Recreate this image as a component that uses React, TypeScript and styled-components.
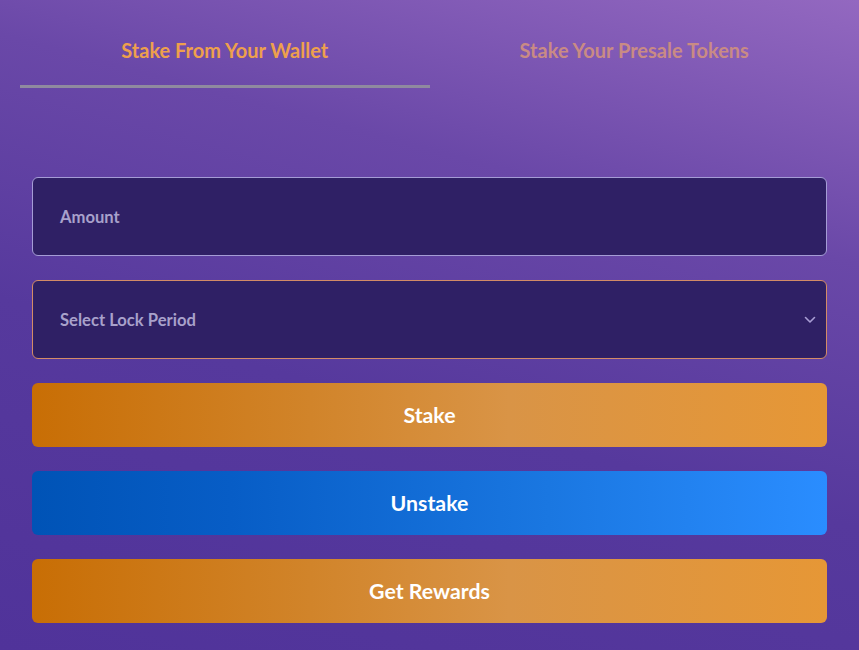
import React from "react";
import styled, { createGlobalStyle } from "styled-components";

const Global = createGlobalStyle`
  html, body { margin: 0; padding: 0; }
  body {
    font-family: Lato, "Noto Sans", sans-serif;
    background: #52359a;
  }
  * { box-sizing: border-box; }
`;

const Page = styled.div`
  width: 859px;
  height: 650px;
  overflow: hidden;
  background: linear-gradient(15deg, #50339a 0%, #56399d 40%, #6a48a8 70%, #9368c0 100%);
  padding: 0 20px;
`;

const Tabs = styled.div`
  display: grid;
  grid-template-columns: 1fr 1fr;
`;

const Tab = styled.div<{ $active?: boolean }>`
  padding: 38px 0 23px;
  line-height: 24px;
  font-size: 20px;
  font-weight: 700;
  text-align: center;
  color: ${(p) => (p.$active ? "#eea04c" : "#c98b84")};
  border-bottom: 3px solid ${(p) => (p.$active ? "#8f8a9f" : "transparent")};
`;

const Form = styled.div`
  display: flex;
  flex-direction: column;
  gap: 24px;
  padding: 89px 12px 0;
`;

const Field = styled.div<{ $accent?: boolean }>`
  height: 79px;
  background: #2f2065;
  border: 1px solid ${(p) => (p.$accent ? "#d48b66" : "#a59cd6")};
  border-radius: 6px;
  display: flex;
  align-items: center;
  justify-content: space-between;
  padding: 0 10px 0 27px;
  font-size: 16.6px;
  font-weight: 700;
  color: #a8a1cb;
`;

const Button = styled.div<{ $variant: "orange" | "blue" }>`
  height: 64px;
  border-radius: 6px;
  display: flex;
  align-items: center;
  justify-content: center;
  font-size: 21.3px;
  font-weight: 700;
  color: #ffffff;
  background: ${(p) =>
    p.$variant === "blue"
      ? "linear-gradient(90deg, #0053b6 0%, #075dc6 25%, #1a77e1 65%, #2a8dff 100%)"
      : "linear-gradient(90deg, #c86e05 0%, #d1842a 35%, #d99446 60%, #e69736 100%)"};
`;

const Chevron = () => (
  <svg width="12" height="8" viewBox="0 0 12 8" fill="none">
    <path d="M1.5 1.5 L6 6 L10.5 1.5" stroke="#a99ed4" strokeWidth="1.6" strokeLinecap="round" strokeLinejoin="round" />
  </svg>
);

export default function App() {
  return (
    <>
      <Global />
      <Page>
        <Tabs>
          <Tab $active>Stake From Your Wallet</Tab>
          <Tab>Stake Your Presale Tokens</Tab>
        </Tabs>
        <Form>
          <Field>Amount</Field>
          <Field $accent>
            <span>Select Lock Period</span>
            <Chevron />
          </Field>
          <Button $variant="orange">Stake</Button>
          <Button $variant="blue">Unstake</Button>
          <Button $variant="orange">Get Rewards</Button>
        </Form>
      </Page>
    </>
  );
}
